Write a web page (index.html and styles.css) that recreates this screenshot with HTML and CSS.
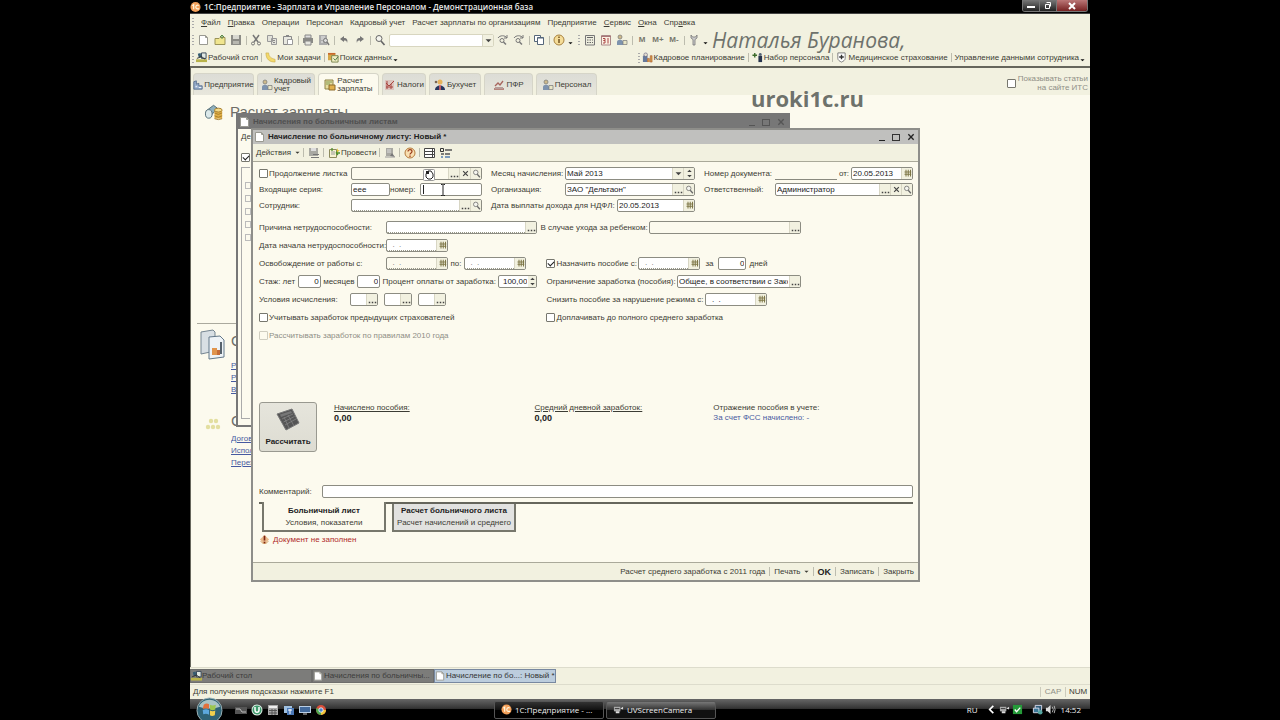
FILE: index.html
```html
<!DOCTYPE html>
<html lang="ru">
<head>
<meta charset="utf-8">
<title>1С:Предприятие - Зарплата и Управление Персоналом</title>
<link rel="stylesheet" href="styles.css">
</head>
<body>
<svg class="defs" aria-hidden="true">
  <symbol id="page" viewBox="0 0 12 12"><path d="M1.500 1.500h6l2 2v7h-8z" fill="#fff" stroke="#9a9a92"/><path d="M7.500 1.500v2h2" fill="none" stroke="#9a9a92"/></symbol>
  <symbol id="open" viewBox="0 0 12 12"><path d="M1 4.500h4l1-1h5v7H1z" fill="#f0e58e" stroke="#9a9358"/><path d="M8 5V1M6 3l2-2 2 2" fill="none" stroke="#5a8a4a"/></symbol>
  <symbol id="save" viewBox="0 0 12 12"><path d="M1 1h10v10H1z" fill="#8c8c86"/><path d="M3 1h6v4H3z" fill="#d8d8d0"/><path d="M3 7h6v3H3z" fill="#b8b8b0"/></symbol>
  <symbol id="cut" viewBox="0 0 12 12"><path d="M3 1l5 7M9 1L4 8" stroke="#777" stroke-width="1.500"/><circle cx="3" cy="9.500" r="1.500" fill="none" stroke="#777"/><circle cx="9" cy="9.500" r="1.500" fill="none" stroke="#777"/></symbol>
  <symbol id="copy" viewBox="0 0 12 12"><path d="M1.500 1.500h5v6h-5zM5.500 4.500h5v6h-5z" fill="#e2e2da" stroke="#999"/><path d="M7 6.500h2M7 8.500h2" stroke="#888"/></symbol>
  <symbol id="paste" viewBox="0 0 12 12"><path d="M1.500 2.500h8v8h-8z" fill="#e8e8e0" stroke="#888"/><path d="M4 1h3v2H4z" fill="#888"/><path d="M5.500 5.500h5v5h-5z" fill="#fff" stroke="#999"/></symbol>
  <symbol id="print" viewBox="0 0 12 12"><path d="M3 1h6v3H3z" fill="#ddd" stroke="#888"/><path d="M1 4h10v5H1z" fill="#8a8a86"/><path d="M3 7h6v4H3z" fill="#e6e6e0" stroke="#888"/></symbol>
  <symbol id="preview" viewBox="0 0 12 12"><path d="M1 1h8v10H1z" fill="#aaa"/><path d="M3 3h4M3 5h3M3 8h2" stroke="#eee"/><circle cx="7.500" cy="6.500" r="2" fill="#ddd" stroke="#777"/><path d="M9 8l2 3" stroke="#777" stroke-width="1.500"/></symbol>
  <symbol id="undo" viewBox="0 0 12 12"><path d="M2 5l4-3v2c3 0 4 2 3 5 0-2-1-2.500-3-2.500V8z" fill="#777"/></symbol>
  <symbol id="redo" viewBox="0 0 12 12"><path d="M10 5L6 2v2C3 4 2 6 3 9c0-2 1-2.500 3-2.500V8z" fill="#777"/></symbol>
  <symbol id="lens" viewBox="0 0 12 12"><circle cx="5" cy="4.500" r="3" fill="#f4f4ee" stroke="#666"/><path d="M7 7l3.500 4" stroke="#666" stroke-width="1.600"/></symbol>
  <symbol id="next" viewBox="0 0 12 12"><path d="M1 4c2-3 7-3 9 0M10 1v3H7" fill="none" stroke="#777"/><circle cx="5" cy="6.500" r="2" fill="none" stroke="#777"/><path d="M6.500 8L9 10.500" stroke="#777" stroke-width="1.500"/></symbol>
  <symbol id="wins" viewBox="0 0 12 12"><path d="M1.500 1.500h6v6h-6z" fill="#fff" stroke="#55667a"/><path d="M4.500 3.500h6v7h-6z" fill="#fff" stroke="#55667a"/><path d="M4.500 4h6" stroke="#55667a"/></symbol>
  <symbol id="info" viewBox="0 0 12 12"><circle cx="6" cy="6" r="5" fill="#f5dd98" stroke="#a8813d"/><path d="M6 5v4M6 2.500v1.500" stroke="#6b4a1c" stroke-width="1.400"/></symbol>
  <symbol id="calc" viewBox="0 0 12 12"><path d="M1.500 1.500h9v9.500h-9z" fill="#eeeede" stroke="#777"/><path d="M3 3.500h6M3 6h1.500M5.500 6H7M8 6h1M3 8.500h1.500M5.500 8.500H7M8 8.500h1" stroke="#666"/></symbol>
  <symbol id="cal31" viewBox="0 0 12 12"><path d="M1.500 1.500h9v9.500h-9z" fill="#fbf1e2" stroke="#a88"/><path d="M1 2.500h10" stroke="#a77"/><path d="M3 4.500h2v2H3.500H5v2.500H3M8 4v5.500" stroke="#a44" fill="none"/></symbol>
  <symbol id="people" viewBox="0 0 12 12"><circle cx="4" cy="3" r="2" fill="#cdb98a" stroke="#777" stroke-width=".7"/><path d="M1 11V8c0-3 6-3 6 0v3z" fill="#7e93ae"/><path d="M7 6.500h4v4H7z" fill="#e9e6c6" stroke="#777" stroke-width=".7"/></symbol>
  <symbol id="wrench" viewBox="0 0 12 12"><path d="M3 1v3l2 1.500V11h2V5.500L9 4V1L7.500 3h-3z" fill="#ccc" stroke="#777" stroke-width=".8"/></symbol>
  <symbol id="desk" viewBox="0 0 12 12"><path d="M0 8h12v3H0z" fill="#b9b34a"/><path d="M2 2l3-1 1 5H3z" fill="#345b70"/><path d="M6 1h5v6H6z" fill="#dfe7e2" stroke="#345"/><path d="M1 7l5-2 4 3" stroke="#333" fill="none"/></symbol>
  <symbol id="note" viewBox="0 0 12 12"><path d="M1 1h3c0 4 3 6 7 7v3C5 11 1 8 1 1z" fill="#f2d96c" stroke="#c5a545" stroke-width=".6"/></symbol>
  <symbol id="search" viewBox="0 0 12 12"><path d="M0 1h8v8H0z" fill="#d6a948"/><path d="M0 2h8" stroke="#c65d2b" stroke-width="1.500"/><path d="M4 4h7v7H4z" fill="#f2efc4" stroke="#77834e"/><path d="M6 7l2 2 3-4" stroke="#3a7040" fill="none"/></symbol>
  <symbol id="plan" viewBox="0 0 12 12"><path d="M1 11V5l3-4 2 4v6z" fill="#66799a"/><circle cx="4" cy="3" r="2" fill="#e5dfd0" stroke="#557" stroke-width=".6"/><path d="M6 11V7h2v4M9 11V4h2v7z" fill="#d69a45" stroke="#a0522d" stroke-width=".6"/></symbol>
  <symbol id="hire" viewBox="0 0 12 12"><path d="M3 1v5M.5 3.500h5" stroke="#3a6a2a" stroke-width="1.500"/><circle cx="9" cy="2.500" r="1.500" fill="#567"/><path d="M7 4h4v7H7z" fill="#27344d"/></symbol>
  <symbol id="shield" viewBox="0 0 12 12"><path d="M2 1h8v6c0 2-2 3-4 4-2-1-4-2-4-4z" fill="#fff" stroke="#777"/><path d="M6 3v5M3.500 5.500h5" stroke="#333" stroke-width="1.500"/></symbol>
  <symbol id="house" viewBox="0 0 12 12"><path d="M1 11V2l3-1v4l3-1v3h4v4z" fill="#9ab0cf" stroke="#4f6687"/><path d="M3 8h2M7 9h3" stroke="#fff"/></symbol>
  <symbol id="pay" viewBox="0 0 12 12"><path d="M1 1h8v9H1z" fill="#e7dda0" stroke="#8c8347"/><path d="M2 3h6M2 5h4" stroke="#7f9a55"/><path d="M5 6h6v5H5z" fill="#e1b04c" stroke="#8c6a2b"/></symbol>
  <symbol id="tax" viewBox="0 0 12 12"><path d="M1 1h9v10H1z" fill="#dcc3bc"/><path d="M2 4l3 3 5-5M2 8h7M3 2v8M7 5v5" stroke="#a8433c" fill="none"/></symbol>
  <symbol id="book" viewBox="0 0 12 12"><circle cx="6" cy="3" r="2.500" fill="#e7b25b"/><path d="M1 11c0-6 10-6 10 0z" fill="#27365e"/><path d="M6 6v5" stroke="#e66" stroke-width="1.500"/><circle cx="2" cy="3" r="1.300" fill="#765"/></symbol>
  <symbol id="fund" viewBox="0 0 12 12"><path d="M1 10h10M2 7l3-3 2 2 3-4" stroke="#a7655d" fill="none" stroke-width="1.300"/><path d="M2 8h8v2H2z" fill="#b79c98"/></symbol>
  <symbol id="grid" viewBox="0 0 12 12"><path d="M4 1v9M7 1v9M10 1v9M2 4h9M2 7h9" stroke="#7b7444" stroke-width="1.300"/></symbol>
  <symbol id="help" viewBox="0 0 12 12"><circle cx="6" cy="6" r="5" fill="#f8dfb1" stroke="#b5793a"/><path d="M4 4.500c0-2.500 4-2.500 4 0 0 1.500-2 1.300-2 3M6 8.500V10" stroke="#9b3a1a" fill="none" stroke-width="1.200"/></symbol>
  <symbol id="post" viewBox="0 0 12 12"><path d="M1.500 2.500h7v8h-7z" fill="#f6f3d2" stroke="#8c8a5c"/><path d="M3 5h4M3 7h4" stroke="#999"/><path d="M4 1v3M8 6h4M8 6l2-2M8 6l2 2" stroke="#4d8f2b" stroke-width="1.300"/><path d="M9 1l1 2 2 .5-2 .8-1 1.700z" fill="#e8c531"/></symbol>
  <symbol id="ghost" viewBox="0 0 12 12"><path d="M2 1h7v8H2z" fill="#a8a8a2"/><path d="M3 3h4M3 5h4" stroke="#ddd"/><path d="M6 9l2-3 3 4z" fill="#777"/><path d="M1 10h10" stroke="#999"/></symbol>
  <symbol id="ghost2" viewBox="0 0 12 12"><path d="M1 1h9v8H1z" fill="#a8a8a2"/><path d="M3 1h5v3H3z" fill="#ddd"/><path d="M3 10.500h8M5 7.500h6" stroke="#777"/></symbol>
  <symbol id="list" viewBox="0 0 12 12"><path d="M.5 1.500h10v3H.5zM.5 4.500h10v3H.5zM.5 7.500h10v3H.5zM8.500 1.500v9" fill="#fff" stroke="#444"/></symbol>
  <symbol id="opts" viewBox="0 0 12 12"><path d="M.5 1.500h3v3h-3z" fill="none" stroke="#333"/><path d="M1 7h3M5 3h7M5 7h5" stroke="#555" stroke-width="1.500"/><path d="M1 10h2M5 10h5" stroke="#557fb0" stroke-width="1.500"/></symbol>
  <symbol id="cross" viewBox="0 0 12 12"><path d="M2 2l8 8M10 2l-8 8" stroke="currentColor" stroke-width="2"/></symbol>
  <symbol id="down" viewBox="0 0 12 12"><path d="M1 4h10L6 9z" fill="currentColor"/></symbol>
  <symbol id="spin" viewBox="0 0 12 12"><path d="M3 4h6L6 1zM3 8h6l-3 3z" fill="#444"/></symbol>
  <symbol id="dots" viewBox="0 0 12 12"><path d="M1 9h2v2H1zM5 9h2v2H5zM9 9h2v2H9z" fill="#444"/></symbol>
  <symbol id="one" viewBox="0 0 12 12"><circle cx="6" cy="6" r="5.500" fill="#f3a05a"/><path d="M2.500 4.500L4 3.500v5M9.500 4.500c-3-2-4.500 3-1.500 3.500h2" fill="none" stroke="#fff7df" stroke-width="1.300"/></symbol>
  <symbol id="warn" viewBox="0 0 12 12"><path d="M6 1l5 5-5 5-5-5z" fill="#e9b98c"/><path d="M2 8c2 3 6 3 8 0" stroke="#c8873f" fill="none"/><path d="M6 2v5M6 8.500V10" stroke="#7c2410" stroke-width="1.800"/></symbol>
  <symbol id="cam" viewBox="0 0 12 12"><path d="M1 3h7v5H1z" fill="#aaa"/><path d="M8 5l3-2v3zM3 8h4v2H3z" fill="#ddd"/><path d="M2 5h5" stroke="#333"/></symbol>
</svg>

<div class="screen">
  <header class="titlebar">
    <svg class="ic"><use href="#one"/></svg>
    <h1>1С:Предприятие - Зарплата и Управление Персоналом - Демонстрационная база</h1>
    <div class="syskeys">
      <button aria-label="Свернуть"><svg viewBox="0 0 12 8"><path d="M2 4h8v2H2z" fill="#fff"/></svg></button>
      <button aria-label="Восстановить"><svg viewBox="0 0 12 8"><path d="M4.500.5h4v4M3.500 2.500h4v4h-4z" fill="none" stroke="#fff"/></svg></button>
      <button class="kill" aria-label="Закрыть"><svg viewBox="0 0 12 8"><path d="M3 1l6 6M9 1L3 7" stroke="#fff" stroke-width="2"/></svg></button>
    </div>
  </header>

  <div class="chrome">
    <nav class="menu">
      <i class="grip"></i>
      <button><u>Ф</u>айл</button><button><u>П</u>равка</button><button>Операции</button><button>Персонал</button><button>Кадровый учет</button><button>Расчет зарплаты по организациям</button><button>Предприятие</button><button><u>С</u>ервис</button><button><u>О</u>кна</button><button>Спр<u>а</u>вка</button>
    </nav>
    <div class="tools">
      <i class="grip"></i>
      <button aria-label="Новый"><svg class="ic"><use href="#page"/></svg></button>
      <button aria-label="Открыть"><svg class="ic"><use href="#open"/></svg></button>
      <button aria-label="Сохранить"><svg class="ic"><use href="#save"/></svg></button>
      <i class="sep"></i>
      <button aria-label="Вырезать"><svg class="ic"><use href="#cut"/></svg></button>
      <button aria-label="Копировать"><svg class="ic"><use href="#copy"/></svg></button>
      <button aria-label="Вставить"><svg class="ic"><use href="#paste"/></svg></button>
      <i class="sep"></i>
      <button aria-label="Печать"><svg class="ic"><use href="#print"/></svg></button>
      <button aria-label="Просмотр"><svg class="ic"><use href="#preview"/></svg></button>
      <i class="sep"></i>
      <button aria-label="Отменить"><svg class="ic"><use href="#undo"/></svg></button>
      <button aria-label="Вернуть"><svg class="ic"><use href="#redo"/></svg></button>
      <i class="sep"></i>
      <button aria-label="Найти"><svg class="ic"><use href="#lens"/></svg></button>
      <span class="field find"><input aria-label="Поиск"><button aria-label="Список"><svg><use href="#down"/></svg></button></span>
      <button aria-label="Найти далее"><svg class="ic"><use href="#next"/></svg></button>
      <button aria-label="Найти ранее"><svg class="ic"><use href="#next"/></svg></button>
      <i class="sep"></i>
      <button aria-label="Окна"><svg class="ic"><use href="#wins"/></svg></button>
      <i class="sep"></i>
      <button aria-label="Справка"><svg class="ic"><use href="#info"/></svg></button>
      <svg class="more"><use href="#down"/></svg>
      <i class="grip"></i>
      <button aria-label="Калькулятор"><svg class="ic"><use href="#calc"/></svg></button>
      <button aria-label="Календарь"><svg class="ic"><use href="#cal31"/></svg></button>
      <button aria-label="Пользователи"><svg class="ic"><use href="#people"/></svg></button>
      <i class="sep"></i>
      <button class="mem">M</button><button class="mem">M+</button><button class="mem">M-</button>
      <i class="sep"></i>
      <button aria-label="Настройка"><svg class="ic"><use href="#wrench"/></svg></button>
      <svg class="more"><use href="#down"/></svg>
    </div>
    <div class="quick">
      <i class="grip"></i>
      <button><svg class="ic"><use href="#desk"/></svg>Рабочий стол</button><i class="sep"></i>
      <button><svg class="ic"><use href="#note"/></svg>Мои задачи</button><i class="sep"></i>
      <button><svg class="ic"><use href="#search"/></svg>Поиск данных</button><svg class="more"><use href="#down"/></svg>
      <span class="push"></span>
      <i class="grip"></i>
      <button><svg class="ic"><use href="#plan"/></svg>Кадровое планирование</button><i class="sep"></i>
      <button><svg class="ic"><use href="#hire"/></svg>Набор персонала</button><i class="sep"></i>
      <button><svg class="ic"><use href="#shield"/></svg>Медицинское страхование</button><i class="sep"></i>
      <button>Управление данными сотрудника</button><svg class="more"><use href="#down"/></svg>
    </div>
  </div>

  <main class="work">
    <div class="tabs">
      <button class="t1"><svg class="ic"><use href="#house"/></svg>Предприятие</button>
      <button class="t2"><svg class="ic"><use href="#people"/></svg>Кадровый<br>учет</button>
      <button class="t3 on"><svg class="ic"><use href="#pay"/></svg>Расчет<br>зарплаты</button>
      <button class="t4"><svg class="ic"><use href="#tax"/></svg>Налоги</button>
      <button class="t5"><svg class="ic"><use href="#book"/></svg>Бухучет</button>
      <button class="t6"><svg class="ic"><use href="#fund"/></svg>ПФР</button>
      <button class="t7"><svg class="ic"><use href="#people"/></svg>Персонал</button>
      <label class="its"><input type="checkbox"><span>Показывать статьи<br>на сайте ИТС</span></label>
    </div>

    <section class="desktop">
      <h2><svg viewBox="0 0 22 20"><path d="M2 9l8-6 4 3-6 7z" fill="#8fb0bd" stroke="#546d77"/><ellipse cx="5" cy="12" rx="3.500" ry="4.500" fill="#dce9ea" stroke="#546d77"/><path d="M11 8h8v9h-8z" fill="#e0ae45"/><ellipse cx="15" cy="8" rx="4" ry="2" fill="#f4db87" stroke="#a67d2e"/><path d="M11 11q4 3 8 0M11 14q4 3 8 0M11 17q4 2 8 0" fill="none" stroke="#a67d2e"/></svg>Расчет зарплаты</h2>
      <div class="block reports">
        <svg viewBox="0 0 26 32"><path d="M1 3l12-2 2 2v19L1 25z" fill="#d8dfe4" stroke="#758591"/><path d="M9 8l11-1 4 4v17L9 30z" fill="#eef3f7" stroke="#63788a"/><path d="M12 19h5v7h-5z" fill="#e0944d"/><path d="M17 21h3v5h-3z" fill="#c46b37"/><path d="M20 13h2v12h-2z" fill="#56626c"/></svg>
        <div><h3>О</h3><a href="#">Р</a><a href="#">Р</a><a href="#">В</a></div>
      </div>
      <div class="block seealso">
        <svg viewBox="0 0 26 32"><g fill="#e3dfa0"><circle cx="11" cy="12" r="2.200"/><circle cx="16" cy="12" r="2.200"/><circle cx="8" cy="18" r="2.200"/><circle cx="13" cy="18" r="2.200"/><circle cx="18" cy="18" r="2.200"/></g></svg>
        <div><h3>С</h3><a href="#">Догов</a><a href="#">Испол</a><a href="#">Перех</a></div>
      </div>
    </section>

    <section class="win back">
      <header><svg class="ic"><use href="#page"/></svg><h2>Начисления по больничным листам</h2><span class="keys"><i class="min"></i><i class="max"></i><svg><use href="#cross"/></svg></span></header>
      <div class="backbody">
        <span>Де</span>
        <input type="checkbox" checked aria-label="Отбор">
        <div class="rows"><i></i><i></i><i></i><i></i><i></i></div>
      </div>
    </section>

    <section class="win front">
      <header><svg class="ic"><use href="#page"/></svg><h2>Начисление по больничному листу: Новый *</h2><span class="keys"><i class="min"></i><i class="max"></i><svg><use href="#cross"/></svg></span></header>
      <div class="wtools">
        <button>Действия <svg class="tiny"><use href="#down"/></svg></button><i class="sep"></i>
        <button aria-label="Записать"><svg class="ic"><use href="#ghost2"/></svg></button><i class="sep"></i>
        <button><svg class="ic"><use href="#post"/></svg>Провести</button><i class="sep"></i>
        <button aria-label="Ввести на основании"><svg class="ic"><use href="#ghost"/></svg></button><i class="sep"></i>
        <button aria-label="Справка"><svg class="ic"><use href="#help"/></svg></button><i class="sep"></i>
        <button aria-label="Список"><svg class="ic"><use href="#list"/></svg></button>
        <button aria-label="Настройка"><svg class="ic"><use href="#opts"/></svg></button>
      </div>
      <form class="form">
        <div class="top">
          <div class="row"><label class="lab1"><input type="checkbox">Продолжение листка</label><span class="field grow off"><input aria-label="Первичный листок"><button type="button" aria-label="Выбрать"><svg><use href="#dots"/></svg></button><button type="button" aria-label="Очистить"><svg><use href="#cross"/></svg></button><button type="button" aria-label="Открыть"><svg><use href="#lens"/></svg></button></span></div>
          <div class="row"><label for="month" class="grow">Месяц начисления:</label><span class="field w130"><select id="month"><option>Май 2013</option></select><button type="button" aria-label="Список"><svg><use href="#down"/></svg></button><button type="button" aria-label="Изменить"><svg><use href="#spin"/></svg></button></span></div>
          <div class="row"><label for="num" class="lab2">Номер документа:</label><input id="num" class="line"><label for="dt" class="from">от:</label><span class="field w62"><input id="dt" value="20.05.2013"><button type="button" aria-label="Календарь"><svg><use href="#grid"/></svg></button></span></div>

          <div class="row"><label for="ser" class="lab1">Входящие серия:</label><span class="field w39"><input id="ser" value="еее"></span><label for="no" class="grow">номер:</label><span class="field w62 focus"><input id="no"></span></div>
          <div class="row"><label for="org" class="grow">Организация:</label><span class="field w130"><input id="org" value='ЗАО "Дельтаон"'><button type="button" aria-label="Выбрать"><svg><use href="#dots"/></svg></button><button type="button" aria-label="Открыть"><svg><use href="#lens"/></svg></button></span></div>
          <div class="row"><label for="resp" class="lab2">Ответственный:</label><span class="field grow"><input id="resp" value="Администратор"><button type="button" aria-label="Выбрать"><svg><use href="#dots"/></svg></button><button type="button" aria-label="Очистить"><svg><use href="#cross"/></svg></button><button type="button" aria-label="Открыть"><svg><use href="#lens"/></svg></button></span></div>

          <div class="row"><label for="emp" class="lab1">Сотрудник:</label><span class="field grow req"><input id="emp"><button type="button" aria-label="Выбрать"><svg><use href="#dots"/></svg></button><button type="button" aria-label="Открыть"><svg><use href="#lens"/></svg></button></span></div>
          <div class="row"><label for="paid" class="grow">Дата выплаты дохода для НДФЛ:</label><span class="field w78"><input id="paid" value="20.05.2013"><button type="button" aria-label="Календарь"><svg><use href="#grid"/></svg></button></span></div>
        </div>

        <div class="mid">
          <div class="row"><label for="why" class="lab3">Причина нетрудоспособности:</label><span class="field grow req"><input id="why"><button type="button" aria-label="Выбрать"><svg><use href="#dots"/></svg></button></span></div>
          <div class="row care"><label for="care" class="grow">В случае ухода за ребенком:</label><span class="field w152 off"><input id="care"><button type="button" aria-label="Выбрать"><svg><use href="#dots"/></svg></button></span></div>

          <div class="row wide"><label for="beg" class="lab3">Дата начала нетрудоспособности:</label><span class="field w62 req"><input id="beg" value="  .  ."><button type="button" aria-label="Календарь"><svg><use href="#grid"/></svg></button></span></div>

          <div class="row"><label for="f1" class="lab3">Освобождение от работы с:</label><span class="field w62 req off"><input id="f1" value="  .  ."><button type="button" aria-label="Календарь"><svg><use href="#grid"/></svg></button></span><label for="f2" class="po">по:</label><span class="field w62 req"><input id="f2" value="  .  ."><button type="button" aria-label="Календарь"><svg><use href="#grid"/></svg></button></span></div>
          <div class="row"><label class="lab1"><input type="checkbox" checked>Назначить пособие с:</label><span class="field w62 req"><input aria-label="Дата пособия" value="  .  ."><button type="button" aria-label="Календарь"><svg><use href="#grid"/></svg></button></span><label for="days" class="za">за</label><span class="field w28 num"><input id="days" value="0"></span><span class="unit">дней</span></div>

          <div class="row spread"><label for="yrs">Стаж: лет</label><span class="field w23 num"><input id="yrs" value="0"></span><label for="mon">месяцев</label><span class="field w23 num"><input id="mon" value="0"></span><label for="pct">Процент оплаты от заработка:</label><span class="field w39 num"><input id="pct" value="100,00"><button type="button" aria-label="Изменить"><svg><use href="#spin"/></svg></button></span></div>
          <div class="row"><label for="lim" class="grow">Ограничение заработка (пособия):</label><span class="field w124"><input id="lim" value="Общее, в соответствии с Закон"><button type="button" aria-label="Выбрать"><svg><use href="#dots"/></svg></button></span></div>

          <div class="row"><span class="lab4">Условия исчисления:</span><span class="trio"><span class="field w28"><input aria-label="Условие 1"><button type="button" aria-label="Выбрать"><svg><use href="#dots"/></svg></button></span><span class="field w28"><input aria-label="Условие 2"><button type="button" aria-label="Выбрать"><svg><use href="#dots"/></svg></button></span><span class="field w28"><input aria-label="Условие 3"><button type="button" aria-label="Выбрать"><svg><use href="#dots"/></svg></button></span></span></div>
          <div class="row"><label for="fine" class="lab5">Снизить пособие за нарушение режима с:</label><span class="field w62"><input id="fine" value="  .  ."><button type="button" aria-label="Календарь"><svg><use href="#grid"/></svg></button></span></div>

          <div class="row"><label><input type="checkbox">Учитывать заработок предыдущих страхователей</label></div>
          <div class="row"><label><input type="checkbox">Доплачивать до полного среднего заработка</label></div>
          <div class="row wide"><label class="dis"><input type="checkbox" disabled>Рассчитывать заработок по правилам 2010 года</label></div>
        </div>

        <div class="sums">
          <button type="button" class="calc"><svg viewBox="0 0 26 24"><path d="M2 7L17 2l7 14-13 7z" fill="#555" stroke="#777"/><path d="M5 7.500L16 4l1 2-11 4z" fill="#777"/><path d="M7 12l11-5M8.500 15l11-5.500M10 18l11-6M9 10l5 11M13 8l6 11" stroke="#888" stroke-width=".7"/></svg>Рассчитать</button>
          <div><u>Начислено пособия:</u><b>0,00</b></div>
          <div><u>Средний дневной заработок:</u><b>0,00</b></div>
          <div><span>Отражение пособия в учете:</span><a href="#">За счет ФСС начислено: -</a></div>
        </div>

        <div class="row note"><label for="com" class="lab6">Комментарий:</label><span class="field grow"><input id="com"></span></div>

        <div class="pages">
          <button type="button" class="on"><b>Больничный лист</b>Условия, показатели</button>
          <button type="button"><b>Расчет больничного листа</b>Расчет начислений и среднего</button>
        </div>
        <p class="alert"><svg><use href="#warn"/></svg>Документ не заполнен</p>
      </form>
      <footer><button>Расчет среднего заработка с 2011 года</button><i class="sep"></i><button>Печать <svg class="tiny"><use href="#down"/></svg></button><i class="sep"></i><button class="ok">OK</button><i class="sep"></i><button>Записать</button><i class="sep"></i><button>Закрыть</button></footer>
      <svg class="hand" viewBox="0 0 12 12"><rect x=".5" y=".5" width="11" height="11" rx="1" fill="#fff" stroke="#999"/><path d="M3 5l2-3h3l2 3v3L8 10H5L3 8z" fill="#fff" stroke="#222"/><path d="M3 5V2h3v3z" fill="#222"/></svg>
      <svg class="ibeam" viewBox="0 0 6 12"><path d="M1 .5h1.500L3 1l.5-.5H5M3 1v10M1 11.500h1.500L3 11l.5.500H5" fill="none" stroke="#222"/></svg>
    </section>
  </main>

  <div class="winbar">
    <button><svg class="ic"><use href="#desk"/></svg>Рабочий стол</button>
    <button><svg class="ic"><use href="#page"/></svg>Начисления по больничны...</button>
    <button class="on"><svg class="ic"><use href="#page"/></svg>Начисление по бо...: Новый *</button>
  </div>
  <div class="status"><span>Для получения подсказки нажмите F1</span><span class="cap">CAP</span><span class="numl">NUM</span></div>

  <footer class="taskbar">
    <button class="start" aria-label="Пуск"><svg viewBox="0 0 28 28"><circle cx="14" cy="14" r="13" fill="#2f6376" stroke="#9fb4b8"/><path d="M3 10a12 12 0 0 1 22 0q-11 4-22 0z" fill="#a9c4c6"/><path d="M8 8q3-2 5.500-.5v5Q11 11 7 12.500z" fill="#e2703c"/><path d="M14.500 8q3 1.500 6 0L20 13q-3 1.500-5.500 0z" fill="#9cc650"/><path d="M7 13.500q3.500-1.500 6.500 0v5q-3-2-6-.5z" fill="#5da8dd"/><path d="M14.500 14q3 1.500 5.500 0l-.5 5q-3 1.500-5 0z" fill="#f0cf4d"/></svg></button>
    <div class="ql">
      <svg viewBox="0 0 12 12"><path d="M0 3h12v7H0z" fill="#555"/><path d="M1 5h4l2 3h4" stroke="#bbb" fill="none"/></svg>
      <svg viewBox="0 0 12 12"><circle cx="6" cy="6" r="5.500" fill="#dfeee6"/><circle cx="6" cy="6" r="4.500" fill="#3e9a6c"/><path d="M4 3v3c0 3 4 3 4 0V3" fill="none" stroke="#fff" stroke-width="1.500"/></svg>
      <svg viewBox="0 0 12 12"><path d="M1 1h10v10H1z" fill="#aaa"/><path d="M2 3h8" stroke="#eee" stroke-width="2"/><path d="M2 6.500h8M2 9h8M5 5v6M8 5v6" stroke="#555"/></svg>
      <svg viewBox="0 0 12 12"><path d="M1 2h8v7H1z" fill="#9fc0e0"/><path d="M4 4h7v7H4z" fill="#4b79b8"/><path d="M5 6h4M7 5v5" stroke="#fff"/></svg>
      <svg viewBox="0 0 12 12"><path d="M0 2h12v7H0z" fill="#b9cee5"/><path d="M1 3h10v5H1z" fill="#42699b"/><path d="M4 10h4" stroke="#ccc"/></svg>
      <svg viewBox="0 0 12 12"><circle cx="6" cy="6" r="5" fill="#d94f3c"/><path d="M6 6L1.500 4A5 5 0 0 0 6 11z" fill="#4ca850"/><path d="M6 6h5a5 5 0 0 1-5 5z" fill="#eec63c"/><circle cx="6" cy="6" r="2.200" fill="#4a82c9" stroke="#fff" stroke-width=".8"/></svg>
    </div>
    <button class="task cur"><svg><use href="#one"/></svg>1С:Предприятие - ...</button>
    <button class="task"><svg><use href="#cam"/></svg>UVScreenCamera</button>
    <div class="tray"><span class="lang">RU</span>
      <svg viewBox="0 0 12 12"><path d="M8 2L4 6l4 4" fill="none" stroke="#fff" stroke-width="1.800"/></svg>
      <svg><use href="#cam"/></svg>
      <svg viewBox="0 0 12 12"><path d="M1 1h10v10H1z" fill="#259b39"/><path d="M3 6l2 2.500L9 4" fill="none" stroke="#fff" stroke-width="1.500"/></svg>
      <svg class="net" viewBox="0 0 12 12"><path d="M3.500 1.500h7v6h-7z" fill="#315d7a" stroke="#dde"/><path d="M1.500 4.500h6v5h-6z" fill="#3b7898" stroke="#dde"/><circle cx="9" cy="9" r="2.500" fill="#55a5a0"/></svg>
      <svg viewBox="0 0 12 12"><path d="M1 4h2l3-3v10L3 8H1z" fill="#ddd"/><path d="M8 3q2 3 0 6M10 2q2 4 0 8" fill="none" stroke="#bbb"/></svg>
      <time>14:52</time></div>
  </footer>
  <div class="mark"><em>Наталья Буранова,</em><strong>uroki1c.ru</strong></div>
</div>
</body>
</html>
```
FILE: styles.css
```css
* { box-sizing: border-box; }
body { margin: 0; background: #000; color: #3c3c34; font: 8px/10px "Liberation Sans", Arial, sans-serif; }
.defs { position: absolute; width: 0; height: 0; }
button, input, select { font: inherit; color: inherit; }
button { display: flex; align-items: center; margin: 0; padding: 0; border: 0; background: none; white-space: nowrap; }
h1, h2, h3, p { margin: 0; font-size: inherit; }
svg { display: block; flex: none; }
label { display: flex; align-items: center; white-space: nowrap; }
.ic { width: 12px; height: 12px; }

.screen { position: relative; display: flex; flex-direction: column; width: min(100%, 125vh); height: 100vh; margin: 0 auto; background: #f2f1e0; overflow: hidden; }

.titlebar { display: flex; align-items: center; gap: 3px; height: 14px; background: #000; color: #e8e8e8; border-bottom: 1px solid #444; }
.titlebar h1 { flex: 1; font: 600 8px/12px "Open Sans", sans-serif; white-space: nowrap; }
.titlebar .ic { width: 11px; }
.syskeys { display: flex; align-self: flex-start; margin-right: 2px; border: 1px solid #777; border-top: 0; border-radius: 0 0 3px 3px; overflow: hidden; }
.syskeys button { width: 17px; height: 11px; justify-content: center; background: linear-gradient(#777, #222); border-right: 1px solid #777; }
.syskeys svg { width: 12px; height: 8px; }
.syskeys .kill { width: 30px; border: 0; background: linear-gradient(#b77, #722); }

.chrome { border-bottom: 2px solid #66665c; background: #f2f1e0; }
.menu, .tools, .quick { display: flex; align-items: center; padding-left: 2px; }
.menu { height: 17px; gap: 7px; }
.menu .grip { margin-right: 0; }
.menu button { height: 16px; }
.grip { flex: none; width: 2px; height: 10px; margin-right: 2px; background: repeating-linear-gradient(#aaa 0 1px, transparent 1px 3px); }
.sep { flex: none; width: 1px; height: 9px; margin: 0 1px 0 2px; background: #bcbcae; }
.more { width: 5px; height: 6px; align-self: flex-end; color: #111; margin: 0 5px 3px 1px; }
.tools { height: 18px; }
.tools > button { width: 16px; height: 14px; justify-content: center; }
.tools .mem { font-weight: bold; color: #77776c; }
.tools .find { width: 105px; margin: 0 1px; border-color: #d8d6c0; }
.quick { height: 17px; }
.quick .ic { width: 11px; height: 11px; }
.quick button { gap: 1px; }
.quick .sep { margin: 0 3px; }
.push { flex: 1; }

.work { position: relative; flex: 1; min-height: 0; background: #fcfaee; border-left: 1px solid #66665c; }
.tabs { display: flex; align-items: flex-end; height: 27px; padding: 0 0 0 2px; gap: 3px; background: #f2f1e0; }
.tabs button { height: 22px; padding: 0; gap: 1px; border: 1px solid #d6d5c8; border-bottom: 0; border-radius: 4px 4px 0 0; background: linear-gradient(#dcdcd6, #e8e7dc); text-align: left; line-height: 8px; justify-content: center; }
.tabs .on { background: #fcfaee; }
.t1 { width: 61px; } .t2 { width: 58px; } .t3 { width: 61px; } .t4 { width: 44px; } .t5 { width: 52px; } .t6 { width: 49px; } .t7 { width: 61px; }
.tabs .t1 .ic { width: 10px; }
.tabs .its { gap: 1px; margin: 0 2px 3px auto; color: #8f8f86; text-align: right; line-height: 9px; }

.desktop { padding: 7px 0 0 6px; }
.desktop h2 { display: flex; align-items: center; gap: 5px; font-weight: normal; font-size: 15px; line-height: 20px; color: #6e6e68; padding-left: 7px; }
.desktop h2 svg { width: 21px; height: 20px; }
.block { display: grid; grid-template-columns: 34px 1fr; }
.block > svg { width: 26px; height: 32px; margin-left: 3px; }
.block h3 { font-weight: normal; font-size: 15px; line-height: 24px; color: #6e6e68; margin-bottom: 7px; }
.block a { display: block; width: 30px; line-height: 12px; color: #4659a0; overflow: hidden; }
.reports { margin-top: 201px; padding-top: 5px; border-top: 1px solid #aaa99e; width: 100px; }
.seealso { margin-top: 13px; }
.seealso h3 { margin-bottom: 0; }

.win { position: absolute; border: 2px solid #8e8e8a; background: #fcfaee; display: flex; flex-direction: column; }
.win header { display: flex; align-items: center; gap: 2px; height: 14px; padding: 0 3px 0 1px; background: #c0c0be; color: #222; }
.win h2 { flex: 1; font-size: 8px; }
.keys { display: flex; align-items: center; gap: 7px; color: #222; }
.keys .min { width: 6px; height: 7px; border-bottom: 1px solid #222; }
.keys .max { width: 8px; height: 7px; border: 1px solid #333; }
.keys svg { width: 8px; height: 8px; }
.back { left: 45px; top: 45px; right: 300px; height: 314px; border-color: #777; }
.back header { background: #777; color: #505050; }
.back .keys { color: #555; }
.back .keys i { border-color: #555; }
.backbody { display: flex; flex-direction: column; flex: 1; width: 12px; padding: 3px 0 6px 3px; gap: 11px; }
.rows { flex: 1; width: 9px; border: 1px solid #aaa; border-right: 0; padding: 14px 0 0 3px; display: flex; flex-direction: column; gap: 6px; margin-top: -6px; }
.rows i { width: 6px; height: 7px; border: 1px solid #bbb; }

.front { left: 60px; right: 170px; top: 60px; }
.wtools { display: flex; align-items: center; height: 18px; padding-left: 1px; background: #f2f1e0; border-bottom: 1px solid #aaa99a; }
.wtools button { gap: 1px; padding: 0 2px; }
.wtools .sep { margin: 0 2px 0 1px; }
.tiny { display: inline-block; width: 5px; height: 5px; margin-left: 3px; }

.form { padding: 5px 5px 0 6px; }
.row { display: flex; align-items: center; min-width: 0; height: 13px; }
.grow { flex: 1; min-width: 0; }
.top { display: grid; grid-template-columns: 223fr 204fr 209fr; column-gap: 9px; row-gap: 3px; }
.mid { display: grid; grid-template-columns: 279fr 255fr; column-gap: 9px; row-gap: 5px; margin: 9px 112px 0 0; }
.wide { grid-column: 1 / -1; }
.care { margin-left: -6px; }
.lab1 { width: 92px; } .lab2 { width: 71px; } .lab3 { width: 127px; } .lab4 { width: 91px; } .lab5 { width: 159px; } .lab6 { width: 63px; }
.spread { justify-content: space-between; }
.trio { display: flex; gap: 6px; }
.po { width: 16px; justify-content: center; }
.za { width: 18px; justify-content: center; }
.unit { margin-left: 3px; }
.from { width: 14px; justify-content: center; }
.line { flex: 1; min-width: 0; height: 12px; padding: 0; border: 0; border-bottom: 1px solid #8a8a80; background: none; }
.dis { color: #8f8f86; }
.w23 { width: 23px; } .w28 { width: 28px; } .w39 { width: 39px; } .w62 { width: 62px; } .w78 { width: 78px; } .w124 { width: 124px; } .w130 { width: 130px; } .w152 { width: 152px; }

.field { display: flex; height: 13px; border: 1px solid #8c8c82; border-radius: 2px; background: #fff; overflow: hidden; }
.field input, .field select { flex: 1; width: 0; min-width: 0; padding: 0 1px; border: 0; outline: 0; background: none; color: #222; appearance: none; }
.field button { justify-content: center; width: 11px; background: #f2f1e0; border-left: 1px solid #d8d6c4; color: #444; }
.field button svg { width: 9px; height: 9px; }
.field button:has([href="#down"]) svg, .field button:has([href="#cross"]) svg { width: 7px; height: 7px; }
.off { background: #fcfaee; }
.req input { border-bottom: 1px dotted #998; color: #777; }
.num input { text-align: right; }
.num button { width: 8px; border-left: 0; }
.focus input { background: linear-gradient(#222, #222) 2px 1px / 1px 9px no-repeat; }

input[type="checkbox"] { appearance: none; flex: none; width: 9px; height: 9px; margin: 0 1px 0 0; border: 1px solid #77776e; border-radius: 1px; background: #fff; }
input[type="checkbox"]:checked::after { content: ""; display: block; width: 5px; height: 3px; margin: 1px; border: solid #222; border-width: 0 0 1px 1px; transform: rotate(-45deg); }
input[type="checkbox"]:disabled { border-color: #cfcdc0; background: none; }

.sums { display: grid; grid-template-columns: 75fr 201fr 179fr 200fr; align-items: start; margin-top: 60px; }
.sums > div { display: flex; flex-direction: column; align-items: flex-start; padding-top: 1px; white-space: nowrap; }
.sums b { color: #222; font-size: 9px; }
.sums a { color: #4659a0; text-decoration: none; }
.sums .calc { flex-direction: column; justify-content: center; gap: 6px; width: 58px; height: 50px; border: 1px solid #999990; border-radius: 3px; background: linear-gradient(#e6e5dc, #dddcd2); color: #222; font-weight: bold; }
.calc svg { width: 26px; height: 24px; }
.note { margin-top: 33px; }
.pages { display: flex; margin-top: 4px; border-top: 2px solid #66665c; padding-left: 3px; gap: 6px; }
.pages button { flex-direction: column; justify-content: center; gap: 2px; width: 124px; height: 28px; border: 2px solid #77776c; border-top: 0; background: #e2e2e0; line-height: 10px; }
.pages .on { background: #fcfaee; margin-top: -2px; padding-top: 2px; height: 30px; }
.pages b { color: #222; }
.alert { display: flex; align-items: center; gap: 3px; margin-top: 2px; color: #b02a2a; }
.alert svg { width: 11px; height: 11px; }
.win footer { display: flex; align-items: center; justify-content: flex-end; height: 18px; margin-top: 17px; padding-right: 4px; border-top: 1px solid #aaa99a; background: #f2f1e0; }
.win footer .sep { margin: 0 4px; }
.ok { font-weight: bold; font-size: 9px; color: #222; }
.hand { position: absolute; left: 170px; top: 39px; width: 12px; height: 12px; }
.ibeam { position: absolute; left: 187px; top: 54px; width: 6px; height: 12px; }

.winbar { display: flex; height: 17px; padding: 1px 0; border-top: 1px solid #dddccc; }
.winbar button { width: 122px; height: 14px; background: #7c7c7a; color: #3c3c3c; border: 1px solid #6e6e6c; }
.winbar .ic { width: 11px; }
.winbar .on { background: #bccddd; border-color: #7888a0; color: #333; }
.status { display: flex; align-items: center; height: 15px; padding-left: 3px; border-top: 1px solid #dddccc; }
.status span:first-child { flex: 1; }
.cap, .numl { width: 25px; text-align: center; border-left: 1px solid #cccbbc; }
.cap { color: #8f8f86; }

.taskbar { display: flex; align-items: center; height: 21px; background: linear-gradient(#666 0, #333 45%, #000 50%); color: #eee; font: 8px/10px "Open Sans", sans-serif; padding-right: 9px; }
.start { width: 28px; height: 21px; align-items: flex-start; margin-left: 6px; }
.start svg { width: 27px; height: 27px; margin-top: -2px; }
.ql { display: flex; gap: 4px; width: 259px; margin-left: 11px; }
.ql svg { width: 12px; height: 12px; }
.task { gap: 3px; width: 110px; height: 18px; margin-right: 2px; padding-left: 6px; border: 1px solid #555; border-radius: 2px; background: linear-gradient(#777, #333 48%, #111 52%); }
.task svg { width: 11px; height: 11px; }
.task.cur { background: linear-gradient(#333, #111 48%, #000 52%); }
.tray { display: flex; align-items: center; gap: 2px; margin-left: auto; }
.tray svg { width: 11px; height: 11px; }
.tray .net { margin-left: 7px; }
.lang { margin-right: 6px; }
.tray time { margin-left: 3px; }

.mark { position: absolute; left: 58%; top: 24px; display: flex; flex-direction: column; color: #6e726c; white-space: nowrap; pointer-events: none; }
.mark em { font: italic 21px/32px "Open Sans", sans-serif; }
.mark strong { font: bold 22px/28px "Open Sans", sans-serif; margin: 28px 0 0 39px; }
```
